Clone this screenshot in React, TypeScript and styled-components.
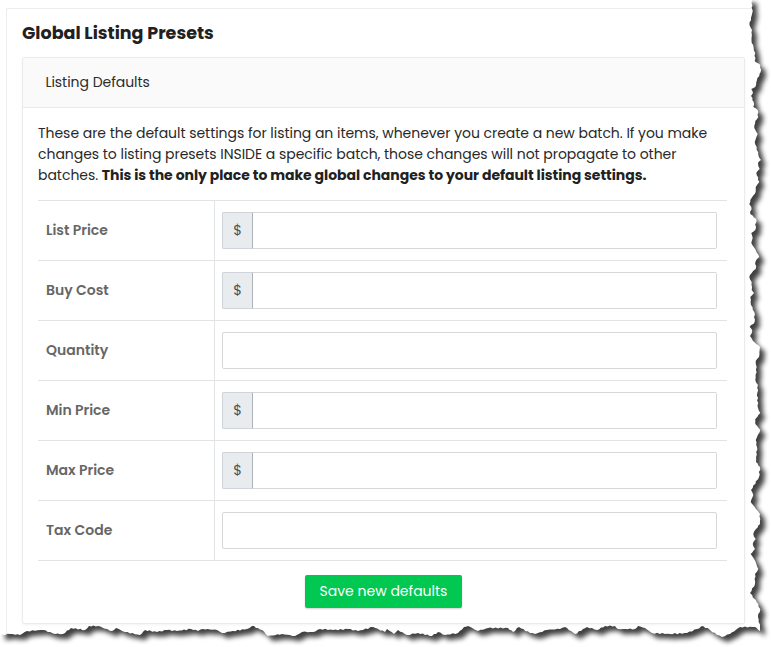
import React from "react";
import styled, { createGlobalStyle } from "styled-components";

const GlobalStyle = createGlobalStyle`
  *, *::before, *::after { box-sizing: border-box; }
  html, body { margin: 0; background: #fff; overflow: hidden; }
  body {
    font-family: Poppins, Inter, sans-serif;
    font-size: 14px;
    line-height: 21px;
    font-weight: 400;
    color: #212529;
  }
`;

const Sheet = styled.div`
  position: relative;
  width: 771px;
  height: 647px;
  padding: 8px 0 0 6px;
  overflow: hidden;
`;

const TornPaper = styled.svg`
  position: absolute;
  inset: 0;
  display: block;
`;

const Card = styled.main`
  position: relative;
  width: 746px;
  height: 626px;
  padding: 14px 7px 0 15px;
  border: solid #ebedef;
  border-width: 1px 0 0 1px;
  border-top-left-radius: 2px;
`;

const Title = styled.h1`
  margin: 0;
  height: 34px;
  font-size: 17.5px;
  line-height: 21px;
  font-weight: 700;
  color: #212121;
`;

const Panel = styled.section`
  width: 723px;
  height: 567px;
  border: 1px solid #e9ecef;
  border-radius: 2px;
  background: #fff;
  box-shadow: 0 1px 3px rgba(0, 0, 0, 0.05);
`;

const PanelHeader = styled.header`
  height: 50px;
  padding: 14px 22.4px;
  border-bottom: 1px solid #e9ecef;
  background: #fafafa;
  letter-spacing: -0.03px;
  color: #2c2c2c;
`;

const PanelBody = styled.div`
  display: flex;
  flex-direction: column;
  align-items: center;
  padding: 15px 17px 0 15px;
`;

const Intro = styled.p`
  align-self: stretch;
  margin: 0 0 14px;
  letter-spacing: -0.036px;
  color: #282828;
  white-space: nowrap;
`;

const Strong = styled.strong`
  font-weight: 700;
  color: #212121;
`;

const Fields = styled.div`
  align-self: stretch;
  border-bottom: 1px solid #e1e3e5;
`;

const Row = styled.div`
  display: grid;
  grid-template-columns: 177px 1fr;
  height: 60px;
  border-top: 1px solid #e1e3e5;
`;

const Label = styled.label`
  padding: 19px 8px 0;
  border-right: 1px solid #e1e3e5;
  font-weight: 600;
  color: #666;
`;

const Control = styled.div`
  display: flex;
  height: 37px;
  margin: 11px 10px 0 7px;
`;

const Prefix = styled.span`
  width: 31px;
  padding-top: 7px;
  border: 1px solid #ced4da;
  border-right-color: #adb2b8;
  border-radius: 2px 0 0 2px;
  background: #e9ecef;
  text-align: center;
  color: #495057;
`;

const Input = styled.input<{ $joined: boolean }>`
  flex: 1;
  min-width: 0;
  border: 1px solid #d5d7d9;
  border-left-width: ${(p) => (p.$joined ? 0 : 1)}px;
  border-radius: ${(p) => (p.$joined ? "0 2px 2px 0" : "2px")};
  background: #fff;
  outline: none;
`;

const SaveButton = styled.button`
  width: 157px;
  height: 33px;
  margin-top: 14px;
  margin-left: 2px;
  padding: 0;
  border: 0;
  border-radius: 2px;
  background: #00c851;
  box-shadow: 0 1px 2px rgba(0, 0, 0, 0.18);
  color: #fff;
  font: inherit;
`;

type Point = [number, number];

const rightEdge: Point[] = [
  [751.7, -2], [752.3, 13], [749.5, 25], [752, 30], [751.5, 40], [753.7, 48], [755.3, 53],
  [754.7, 61], [760.3, 65], [760.7, 72], [757, 80], [755.3, 87], [751.3, 89], [753, 93],
  [751, 96], [753.7, 102], [753.3, 107], [757.7, 110], [758.3, 117], [755.3, 121],
  [754.3, 128], [757.7, 134], [754.7, 142], [756.7, 147], [758.3, 155], [761, 160],
  [758, 163], [759.7, 169], [756.3, 173], [759.3, 182], [755.7, 187], [755.7, 192],
  [750.3, 200], [749.3, 204], [751.3, 207], [750.3, 214], [756.3, 219], [755.3, 230],
  [751.3, 233], [752.7, 238], [751.3, 243], [755.7, 250], [759.3, 257], [755.7, 261],
  [755.7, 269], [751.7, 273], [749.3, 277], [751.7, 282], [751.7, 290], [754, 293],
  [750.3, 297], [751, 305], [754.3, 312], [754.7, 322], [749.7, 327], [752.3, 331],
  [750, 336], [753, 341], [760, 347], [759, 357], [755.7, 361], [756.7, 367], [755.3, 380],
  [758, 385], [757.3, 393], [758, 408], [760.3, 413], [755.3, 419], [755.3, 424],
  [760.3, 430], [755.7, 440], [757, 447], [756, 462], [760, 467], [759, 477], [751, 490],
  [753.3, 495], [750.7, 502], [754.7, 507], [760, 514], [760, 524], [756, 529], [753.3, 534],
  [755.7, 539], [752.7, 544], [755, 549], [750.7, 554], [754.7, 560], [758.3, 569],
  [755, 574], [755, 584], [750, 593], [756.7, 602], [760.3, 609], [758, 617], [760, 627],
];

const bottomEdge: Point[] = [
  [760, 631], [755, 627], [740, 627], [730, 634], [722, 637], [717, 635], [710, 630],
  [703, 626], [697, 629], [687, 633], [670, 634], [652, 633], [645, 628], [638, 626],
  [635, 629], [618, 629], [615, 626], [605, 626], [597, 630], [587, 627], [575, 634],
  [565, 627], [560, 629], [547, 630], [535, 634], [530, 633], [519, 627], [513, 632],
  [508, 628], [488, 628], [478, 631], [468, 626], [464, 627], [458, 633], [445, 635],
  [438, 632], [432, 636], [418, 633], [407, 635], [398, 630], [394, 634], [387, 629],
  [385, 632], [373, 627], [358, 631], [348, 629], [333, 630], [320, 629], [313, 632],
  [302, 632], [295, 636], [282, 634], [268, 636], [262, 630], [258, 628], [252, 626],
  [247, 629], [233, 631], [222, 633], [217, 630], [203, 629], [198, 631], [191, 629],
  [177, 631], [167, 630], [157, 632], [145, 630], [140, 635], [125, 632], [116, 628],
  [112, 631], [98, 626], [89, 626], [85, 630], [71, 628], [63, 634], [55, 634], [43, 630],
  [27, 631], [20, 635], [10, 634], [0, 635],
];

// Splits each segment into short fibres so the tear does not look faceted.
function fray(points: Point[], vertical: boolean): Point[] {
  return points.flatMap((p, i) => {
    const next = points[i + 1];
    if (!next) return [p];
    const steps = Math.max(1, Math.round(Math.hypot(next[0] - p[0], next[1] - p[1]) / 2.5));
    return Array.from({ length: steps }, (_, s): Point => {
      const t = s / steps;
      const n = s === 0 ? 0 : Math.sin(i * 12.9 + s * 78.2) * 0.6;
      return [
        p[0] + (next[0] - p[0]) * t + (vertical ? n : 0),
        p[1] + (next[1] - p[1]) * t + (vertical ? 0 : n),
      ];
    });
  });
}

const outline = [[0, -2] as Point, ...fray(rightEdge, true), ...fray(bottomEdge, false)]
  .map((p) => p.map((v) => v.toFixed(1)).join(","))
  .join(" ");

const fields = [
  { label: "List Price", money: true },
  { label: "Buy Cost", money: true },
  { label: "Quantity", money: false },
  { label: "Min Price", money: true },
  { label: "Max Price", money: true },
  { label: "Tax Code", money: false },
];

export default function App() {
  return (
    <>
      <GlobalStyle />
      <Sheet>
        <TornPaper width="771" height="647" viewBox="0 0 771 647" aria-hidden="true">
          <defs>
            <filter
              id="shade"
              x="-20"
              y="-20"
              width="811"
              height="687"
              filterUnits="userSpaceOnUse"
              colorInterpolationFilters="sRGB"
            >
              <feGaussianBlur stdDeviation="2.4" />
            </filter>
          </defs>
          <polygon points={outline} fill="#000" opacity="0.75" transform="translate(5 5)" filter="url(#shade)" />
          <polygon points={outline} fill="#fff" />
        </TornPaper>
        <Card>
          <Title>Global Listing Presets</Title>
          <Panel>
            <PanelHeader>Listing Defaults</PanelHeader>
            <PanelBody>
              <Intro>
                These are the default settings for listing an items, whenever you create a new batch. If you make
                <br />
                changes to listing presets INSIDE a specific batch, those changes will not propagate to other
                <br />
                batches.{" "}
                <Strong>This is the only place to make global changes to your default listing settings.</Strong>
              </Intro>
              <Fields>
                {fields.map((f) => (
                  <Row key={f.label}>
                    <Label htmlFor={f.label}>{f.label}</Label>
                    <Control>
                      {f.money && <Prefix>$</Prefix>}
                      <Input id={f.label} $joined={f.money} />
                    </Control>
                  </Row>
                ))}
              </Fields>
              <SaveButton>Save new defaults</SaveButton>
            </PanelBody>
          </Panel>
        </Card>
      </Sheet>
    </>
  );
}
